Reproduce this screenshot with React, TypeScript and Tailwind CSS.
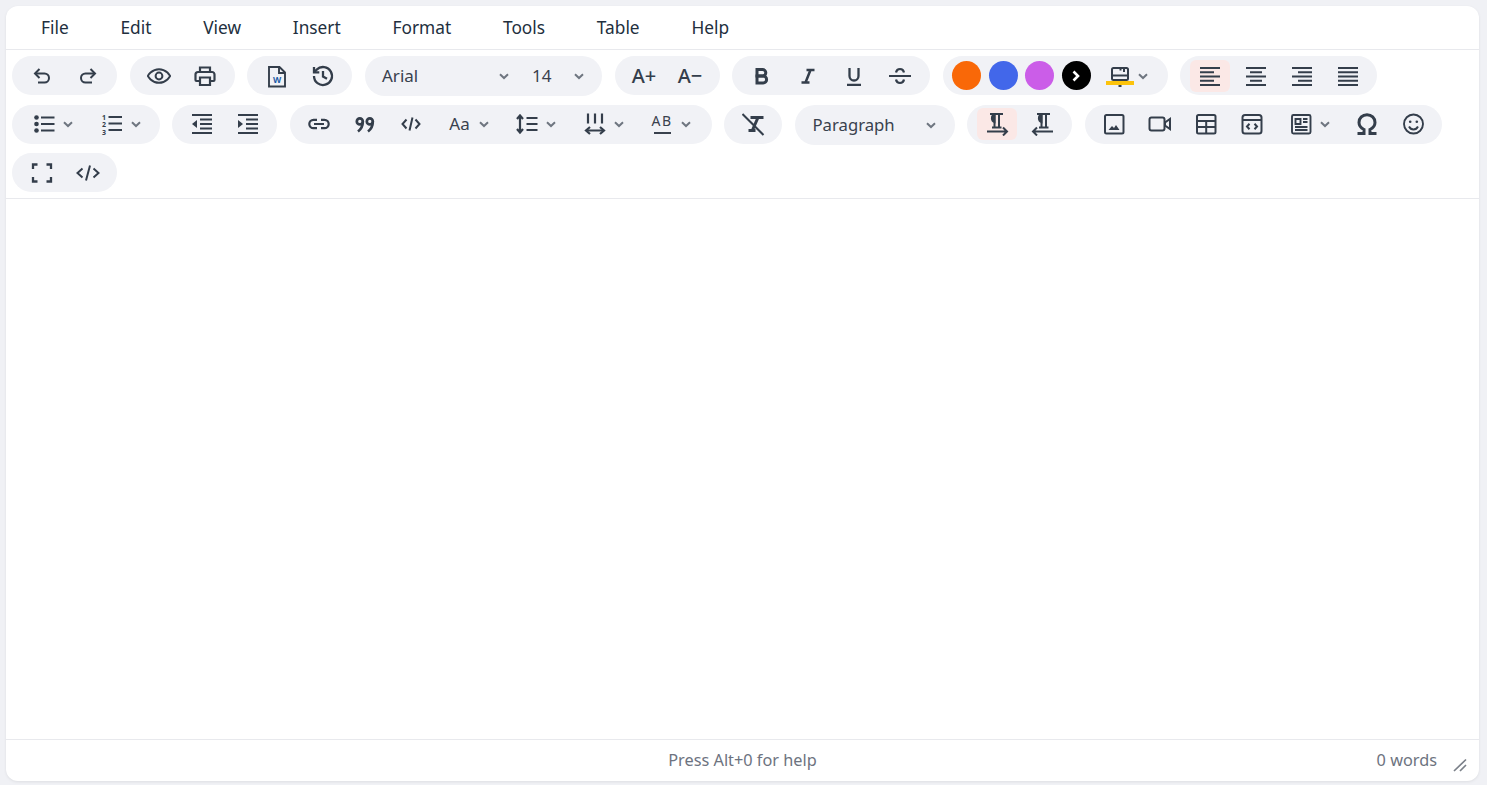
import React from "react";

const Ic: React.FC<{ children: React.ReactNode; sw?: number }> = ({ children, sw = 2 }) => (
  <svg width={24} height={24} viewBox="0 0 24 24" fill="none" stroke="currentColor" strokeWidth={sw} className="shrink-0">
    {children}
  </svg>
);

const Chev = () => (
  <svg width="16" height="16" viewBox="0 0 16 16" fill="none" stroke="#6f7680" strokeWidth="2" className="shrink-0">
    <path d="M4 6.200 8 10l4-3.800" />
  </svg>
);

const Group: React.FC<{ children: React.ReactNode; className?: string }> = ({ children, className = "w-[105px]" }) => (
  <div className={`flex h-[39px] items-center gap-[6px] rounded-[20px] bg-[#f1f2f6] pl-[9.500px] text-[#343e4b] ${className}`}>{children}</div>
);

const Btn: React.FC<{ children: React.ReactNode; active?: boolean }> = ({ children, active }) => (
  <button className={`flex h-[32px] w-[40px] shrink-0 items-center justify-center rounded-md ${active ? "bg-[#fbe8e6]" : ""}`}>
    {children}
  </button>
);

const Drop: React.FC<{ children: React.ReactNode }> = ({ children }) => (
  <button className="flex h-[32px] w-[61.500px] shrink-0 items-center gap-[4px] pl-[10.500px]">
    {children}
    <Chev />
  </button>
);

const Align: React.FC<{ lines: [number, number][] }> = ({ lines }) => (
  <Ic sw={2}>
    {lines.map(([a, b], i) => (
      <path key={i} d={`M${a} ${4 + i * 4.25}H${b}`} />
    ))}
  </Ic>
);

export default function App() {
  return (
    <div className="h-screen overflow-hidden bg-[#f0f1f5] pb-[4px] pl-[6px] pr-[8px] pt-[6px] font-['Noto_Sans',sans-serif] text-[#222f3e]">
      <div className="flex h-full flex-col overflow-hidden rounded-xl bg-white shadow-[0_1px_3px_rgba(0,0,0,0.08)]">
        <div className="flex h-[44px] shrink-0 items-center gap-[51.800px] border-b border-[#e8e9ed] pl-[35px] text-[17.300px]">
          <span>File</span>
          <span>Edit</span>
          <span>View</span>
          <span>Insert</span>
          <span>Format</span>
          <span>Tools</span>
          <span>Table</span>
          <span>Help</span>
        </div>

        <div className="flex h-[149px] shrink-0 flex-wrap content-start items-start gap-x-[12.500px] gap-y-[8.500px] border-b border-[#e8e9ed] p-[6px]">
          <Group>
            <Btn>
              <Ic>
                <path d="M9.500 5 5 9.500 9.500 14" />
                <path d="M5 9.500h9.500a4.500 4.500 0 0 1 0 9H8" />
              </Ic>
            </Btn>
            <Btn>
              <Ic>
                <path d="M14.500 5 19 9.500 14.500 14" />
                <path d="M19 9.500H9.500a4.500 4.500 0 0 0 0 9H16" />
              </Ic>
            </Btn>
          </Group>
          <Group>
            <Btn>
              <Ic>
                <path d="M.800 12S4.500 5.200 12 5.200 23.200 12 23.200 12 19.500 18.800 12 18.800.800 12 .800 12z" />
                <circle cx="12" cy="12" r="3.400" />
              </Ic>
            </Btn>
            <Btn>
              <Ic sw={2.200}>
                <path d="M7 8V3.500h10V8" />
                <path d="M7 17H3.500a1 1 0 0 1-1-1v-5.500A2.500 2.500 0 0 1 5 8h14a2.500 2.500 0 0 1 2.500 2.500V16a1 1 0 0 1-1 1H17" />
                <path d="M7 13.500h10V21H7z" />
              </Ic>
            </Btn>
          </Group>
          <Group>
            <Btn>
              <Ic sw={1.900}>
                <path d="M4 3h10.500L20 8.500V22.500H4z" />
                <path d="M14 3v6h6" />
                <text x="12" y="19" textAnchor="middle" fontSize="8.500" fontWeight="700" fill="#1f5da8" stroke="none" fontFamily="Noto Sans, sans-serif">
                  W
                </text>
              </Ic>
            </Btn>
            <Btn>
              <Ic sw={2.300}>
                <path d="M3 12a9 9 0 1 0 2.700-6.400L3 8.300" />
                <path d="M3 3v5.300h5.300" />
                <path d="M12 7v5.500l4 2.200" />
              </Ic>
            </Btn>
          </Group>

          <div className="flex h-[40px] w-[237.500px] items-center rounded-[20px] bg-[#f1f2f6] text-[17px] text-[#39414d]">
            <span className="ml-[17.500px] w-[113.500px]">Arial</span>
            <Chev />
            <span className="ml-[20.500px] w-[39px]">14</span>
            <Chev />
          </div>

          <Group>
            <Btn>
              <span className="text-[20px] font-medium leading-none">A+</span>
            </Btn>
            <Btn>
              <span className="text-[20px] font-medium leading-none">A−</span>
            </Btn>
          </Group>

          <Group className="w-[198px]">
            <Btn>
              <Ic sw={3}>
                <path d="M7 5.500h5.500a3.300 3.300 0 0 1 0 6.600H7z" />
                <path d="M7 12.100h6.200a3.400 3.400 0 0 1 0 6.800H7z" />
              </Ic>
            </Btn>
            <Btn>
              <Ic sw={2.500}>
                <path d="M10.500 6h8M5.500 18.500h8M14.500 6l-5 12.500" />
              </Ic>
            </Btn>
            <Btn>
              <Ic sw={2.300}>
                <path d="M7.500 4v8a4.500 4.500 0 0 0 9 0V4" />
                <path d="M5 20.800h14" />
              </Ic>
            </Btn>
            <Btn>
              <Ic sw={2.200}>
                <path d="M1 12h22" />
                <path d="M8 8.500C8.500 6 10 5 12 5s3.500 1 4 3.500" />
                <path d="M8 15.500c.500 2.500 2 3.500 4 3.500s3.500-1 4-3.500" />
              </Ic>
            </Btn>
          </Group>

          <Group className="w-[225px] gap-[7.500px]">
            <span className="h-[29px] w-[29px] shrink-0 rounded-full bg-[#f96808]" />
            <span className="h-[29px] w-[29px] shrink-0 rounded-full bg-[#4267ea]" />
            <span className="h-[29px] w-[29px] shrink-0 rounded-full bg-[#cb5de8]" />
            <span className="flex h-[29px] w-[29px] shrink-0 items-center justify-center rounded-full bg-black">
              <svg width="16" height="16" viewBox="0 0 16 16" fill="none" stroke="#fff" strokeWidth="2.600">
                <path d="M5.500 3.500 10 8l-4.500 4.500" />
              </svg>
            </span>
            <span className="relative ml-[10px] flex items-center gap-[3px]">
              <Ic sw={2}>
                <rect x="4" y="4" width="16" height="12" rx="1.500" />
                <path d="M4 11.500h16" />
                <path d="M16 4.500v3.500M12.500 4.500v2" />
                <path d="M12 16v7" strokeWidth="3" />
              </Ic>
              <span className="absolute left-[-2px] top-[17px] h-[4px] w-[28px] bg-[#fcc30b]" />
              <Chev />
            </span>
          </Group>

          <Group className="w-[197px]">
            <Btn active>
              <Align lines={[[2, 22], [2, 16], [2, 22], [2, 16], [2, 22]]} />
            </Btn>
            <Btn>
              <Align lines={[[2, 22], [6, 18], [2, 22], [6, 18], [2, 22]]} />
            </Btn>
            <Btn>
              <Align lines={[[2, 22], [8, 22], [2, 22], [8, 22], [2, 22]]} />
            </Btn>
            <Btn>
              <Align lines={[[2, 22], [2, 22], [2, 22], [2, 22], [2, 22]]} />
            </Btn>
          </Group>

          <Group className="w-[147.500px]">
            <Drop>
              <Ic sw={2.200}>
                <circle cx="4.500" cy="5.500" r="2.300" fill="currentColor" stroke="none" />
                <circle cx="4.500" cy="12" r="2.300" fill="currentColor" stroke="none" />
                <circle cx="4.500" cy="18.500" r="2.300" fill="currentColor" stroke="none" />
                <path d="M9 5.500h13.500M9 12h13.500M9 18.500h13.500" />
              </Ic>
            </Drop>
            <Drop>
              <Ic sw={2.200}>
                <g fill="currentColor" stroke="none" fontSize="7" fontWeight="700" fontFamily="Noto Sans, sans-serif" textAnchor="middle">
                  <text x="4" y="7.500">1</text>
                  <text x="4" y="15">2</text>
                  <text x="4" y="22.500">3</text>
                </g>
                <path d="M8.500 5h13.500M8.500 11.500h13.500M8.500 18h13.500" />
              </Ic>
            </Drop>
          </Group>

          <Group>
            <Btn>
              <Ic sw={2}>
                <path d="M2 3h20M2 21h20M10 7.500h12M10 12h12M10 16.500h12" />
                <path d="M7 8v8l-5-4z" fill="currentColor" stroke="none" />
              </Ic>
            </Btn>
            <Btn>
              <Ic sw={2}>
                <path d="M2 3h20M2 21h20M10 7.500h12M10 12h12M10 16.500h12" />
                <path d="M2 8v8l5-4z" fill="currentColor" stroke="none" />
              </Ic>
            </Btn>
          </Group>

          <Group className="w-[422px]">
            <Btn>
              <Ic sw={2.200}>
                <path d="M10 7.800H6.500a4.200 4.200 0 0 0 0 8.400H10" />
                <path d="M14 7.800h3.500a4.200 4.200 0 0 1 0 8.400H14" />
                <path d="M7 12h10" />
              </Ic>
            </Btn>
            <Btn>
              <Ic sw={2.700}>
                <circle cx="6.800" cy="9.400" r="3" />
                <path d="M9.800 9.500c0 4-1.500 7.500-4.800 10" />
                <circle cx="16.800" cy="9.400" r="3" />
                <path d="M19.800 9.500c0 4-1.500 7.500-4.800 10" />
              </Ic>
            </Btn>
            <Btn>
              <Ic>
                <path d="M7.500 7.500 3.500 12l4 4.500M16.500 7.500l4 4.500-4 4.500M13.500 5.500l-3 13" />
              </Ic>
            </Btn>
            <Drop>
              <span className="-mt-[2px] flex w-[24px] justify-center text-[17px] leading-none text-[#39414d]">Aa</span>
            </Drop>
            <Drop>
              <Ic sw={2.200}>
                <path d="M5 4v16" />
                <path d="M2 7l3-3.500L8 7M2 17l3 3.500L8 17" />
                <path d="M11.500 6h11M11.500 12h11M11.500 18h11" />
              </Ic>
            </Drop>
            <Drop>
              <Ic sw={2.200}>
                <path d="M5 1.500v10M12 1.500v10M19 1.500v10" />
                <path d="M3 18.500h18" />
                <path d="M7 15l-4 3.500L7 22M17 15l4 3.500L17 22" />
              </Ic>
            </Drop>
            <Drop>
              <span className="flex h-[24px] w-[24px] flex-col items-center">
                <span className="text-[14px] leading-[18px] tracking-[1.500px] text-[#39414d]">AB</span>
                <span className="mt-[2px] h-[2px] w-[17px] bg-[#39414d]" />
              </span>
            </Drop>
          </Group>

          <Group className="w-[58px]">
            <Btn>
              <Ic>
                <path d="M.500 2 21.500 23" />
                <path d="M8.500 5.500H21.500" strokeWidth="3" />
                <path d="M16 5.500 10.500 18" strokeWidth="3" />
                <path d="M6.500 18.500h7" strokeWidth="3" />
              </Ic>
            </Btn>
          </Group>

          <div className="flex h-[40px] w-[160px] items-center rounded-[20px] bg-[#f1f2f6] text-[16.700px] text-[#39414d]">
            <span className="ml-[18px] mt-[1px] w-[110px]">Paragraph</span>
            <Chev />
          </div>

          <Group>
            <Btn active>
              <Ic sw={2}>
                <path d="M5 2h13M9.500 2v13.500M14 2v13.500M7 15.500h9.500" />
                <path d="M9.500 2.500a4 4 0 0 0 0 7.500z" fill="currentColor" />
                <path d="M2 19.500h20M18 15.500l4 4-4 4" />
              </Ic>
            </Btn>
            <Btn>
              <Ic sw={2}>
                <path d="M6 2h13M10.500 2v13.500M15 2v13.500M8 15.500h9.500" />
                <path d="M10.500 2.500a4 4 0 0 0 0 7.500z" fill="currentColor" />
                <path d="M22 19.500H2M6 15.500l-4 4 4 4" />
              </Ic>
            </Btn>
          </Group>

          <Group className="w-[357px]">
            <Btn>
              <Ic sw={2}>
                <rect x="3" y="3" width="18.500" height="18.500" rx="1.500" />
                <path d="M6.500 18l3.500-4 2 2 2-3 3.500 5z" fill="currentColor" stroke="none" />
              </Ic>
            </Btn>
            <Btn>
              <Ic sw={2}>
                <rect x="1.500" y="5.500" width="15" height="13" rx="2" />
                <path d="M22 7v10l-5-3.500v-3z" />
              </Ic>
            </Btn>
            <Btn>
              <Ic sw={2}>
                <rect x="3" y="3" width="18.500" height="18.500" rx="1.500" />
                <path d="M3 9h18.500M3 15h18.500M12.200 9v12.500" />
              </Ic>
            </Btn>
            <Btn>
              <Ic sw={2}>
                <rect x="2.500" y="3" width="19" height="18.500" rx="2.500" />
                <path d="M2.500 8h19" />
                <path d="M9.500 11.800 7 14.500l2.500 2.700M14.500 11.800l2.500 2.700-2.500 2.700" />
              </Ic>
            </Btn>
            <Drop>
              <Ic sw={1.900}>
                <rect x="3" y="3" width="18.500" height="18.500" rx="1.500" />
                <path d="M6.500 7h5v5h-5z" />
                <path d="M14 7h4.500M14 10h4.500M6 15h12.500M6 18h12.500" />
              </Ic>
            </Drop>
            <Btn>
              <Ic sw={3}>
                <path d="M3.500 21.500H10v-4C7 16 5 13.500 5 10.500 5 6 8.500 2.800 13 2.800s8 3.200 8 7.700c0 3-2 5.500-5 7v4h6.500" />
              </Ic>
            </Btn>
            <Btn>
              <Ic sw={1.900}>
                <circle cx="13.500" cy="12" r="9.500" />
                <circle cx="10.200" cy="9.800" r="1.300" fill="currentColor" stroke="none" />
                <circle cx="16.800" cy="9.800" r="1.300" fill="currentColor" stroke="none" />
                <path d="M9 14.500c1 2 2.600 3 4.500 3s3.500-1 4.500-3" />
              </Ic>
            </Btn>
          </Group>

          <Group>
            <Btn>
              <Ic sw={2.300}>
                <path d="M3 8V3.500h4.500M16.500 3.500H21V8M21 16v4.500h-4.500M7.500 20.500H3V16" />
              </Ic>
            </Btn>
            <Btn>
              <Ic>
                <path d="M6.500 7.500 1.500 12l5 4.500M17.500 7.500l5 4.500-5 4.500M14 4.500l-4 15" />
              </Ic>
            </Btn>
          </Group>
        </div>

        <div className="flex-1 bg-white" />

        <div className="relative flex h-[42px] shrink-0 items-center justify-center border-t border-[#e8e9ed] pb-[1px] text-[16.300px] text-[#6d7380]">
          <span>Press Alt+0 for help</span>
          <span className="absolute right-[42px]">0 words</span>
          <svg width="16" height="16" viewBox="0 0 16 16" fill="none" stroke="#7b8089" strokeWidth="1.700" className="absolute right-[11px] top-[17px]">
            <path d="M2 14 14 2.500M8 14l6-6" />
          </svg>
        </div>
      </div>
    </div>
  );
}
